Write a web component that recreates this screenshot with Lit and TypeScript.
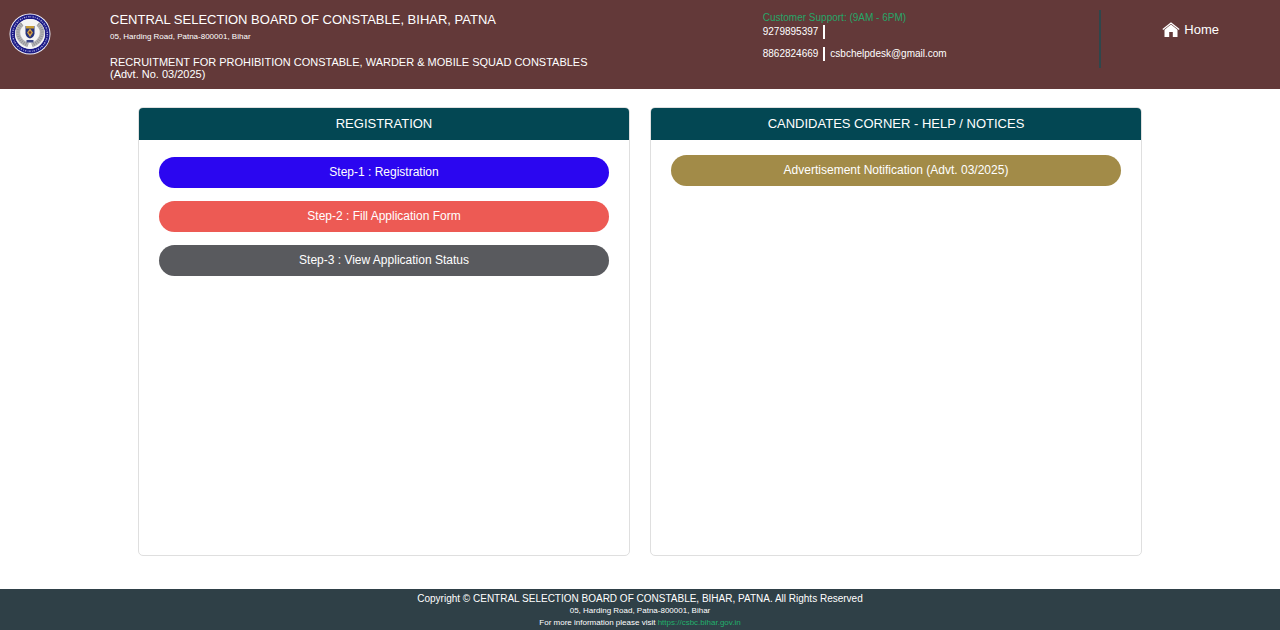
import { LitElement, html, css } from "lit";
import { customElement } from "lit/decorators.js";

@customElement("board-emblem")
class BoardEmblem extends LitElement {
  static styles = css`
    :host { display: block; }
    svg { display: block; width: 42px; height: 42px; }
  `;
  render() {
    return html`
      <svg viewBox="0 0 42 42" role="img" aria-label="Board emblem">
        <circle cx="21" cy="21" r="20.5" fill="#f1f1f8" />
        <circle cx="21" cy="21" r="17.3" fill="none" stroke="#1d1c86" stroke-width="4.6" />
        <circle cx="21" cy="21" r="17.3" fill="none" stroke="#a9a9dc" stroke-width="1.4" stroke-dasharray="1.3 1 .7 1.4" />
        <circle cx="21" cy="21" r="15" fill="#f4f4f4" />
        <path d="M13 11C6 17 8 28 19 32M29 11c7 6 5 17-6 21" fill="none" stroke="#b4b4b6" stroke-width="4.600" />
        <path d="M13 11C6 17 8 28 19 32M29 11c7 6 5 17-6 21" fill="none" stroke="#8f8f94" stroke-width="3" stroke-dasharray=".8 1.400" />
        <path d="M16.500 13h9v7.500q-.5 4-4.500 5-4-1-4.500-5z" fill="#25337c" />
        <path d="M17 13h8v2.500h-8z" fill="#c79c36" />
        <path d="M21 15.500l3 4-3 4.500-3-4.500z" fill="#d2a548" />
        <circle cx="21" cy="19.500" r="1.300" fill="#7b3430" />
        <path d="M17.500 27h7v2.500h-7z" fill="#3c4686" />
      </svg>
    `;
  }
}

@customElement("notice-panel")
class NoticePanel extends LitElement {
  static properties = { heading: {} };
  declare heading: string;
  static styles = css`
    :host {
      display: flex;
      flex-direction: column;
      border: 1px solid #dfdfdf;
      border-radius: 5px;
      background: #fff;
      overflow: hidden;
      box-sizing: border-box;
    }
    .heading {
      margin: 0;
      background: #034753;
      color: #fff;
      font-size: 13px;
      font-weight: 400;
      line-height: 32px;
      text-align: center;
    }
  `;
  render() {
    return html`<h2 class="heading">${this.heading}</h2><slot></slot>`;
  }
}

@customElement("app-root")
class AppRoot extends LitElement {
  static styles = css`
    :host {
      display: flex;
      flex-direction: column;
      min-height: 100vh;
      background: #fff;
      color: #fff;
      font-family: "Liberation Sans", Arial, sans-serif;
    }
    header {
      display: grid;
      grid-template-columns: 101px 106fr 55fr 29fr;
      background: #633939;
      padding: 10px 0 9px 9px;
    }
    h1, p { margin: 0; font-weight: 400; }
    .emblem { padding-top: 3px; }
    .title { font-size: 13px; line-height: 20px; }
    .address { font-size: 8px; line-height: 14px; }
    .post { font-size: 11px; line-height: 12px; margin-top: 12px; }
    .support { font-size: 10px; border-right: 2px solid #2f474c; height: 58px; box-sizing: border-box; padding-top: 1px; }
    .hours { color: #26a668; line-height: 14px; }
    .contact { display: flex; align-items: center; line-height: 14px; margin-bottom: 8px; }
    .contact a { color: #fff; text-decoration: none; }
    .phone { border-right: 2px solid #fff; padding-right: 5px; margin-right: 5px; }
    .home {
      display: flex;
      justify-self: center;
      align-self: start;
      align-items: center;
      gap: 4px;
      margin-top: 12px;
      color: #fff;
      font-size: 13px;
      line-height: 16px;
      text-decoration: none;
    }
    .home svg { width: 18px; height: 16px; }
    main {
      flex: 1;
      display: grid;
      grid-template-columns: 1fr 1fr;
      gap: 20px;
      width: 100%;
      max-width: 1004px;
      box-sizing: border-box;
      margin: 0 auto;
      padding: 18px 0 33px;
    }
    .steps { display: flex; flex-direction: column; gap: 13px; padding: 17px 20px; }
    .notices { padding-top: 15px; }
    button {
      border: 0;
      border-radius: 16px;
      padding: 0 12px 1px;
      color: #fff;
      font: 12px/30px "Liberation Sans", Arial, sans-serif;
      cursor: pointer;
    }
    .register { background: #2b06f0; }
    .fill { background: #ed5a54; }
    .status { background: #595a5e; }
    .advert { background: #a28b48; }
    footer {
      background: #2f4047;
      text-align: center;
      padding: 4px 0 1px;
      font-size: 8px;
      line-height: 12px;
    }
    .copyright { font-size: 10px; line-height: 12px; }
    footer a { color: #22b06c; text-decoration: none; }
  `;
  render() {
    return html`
      <header>
        <board-emblem class="emblem"></board-emblem>
        <div>
          <h1 class="title">CENTRAL SELECTION BOARD OF CONSTABLE, BIHAR, PATNA</h1>
          <p class="address">05, Harding Road, Patna-800001, Bihar</p>
          <p class="post">RECRUITMENT FOR PROHIBITION CONSTABLE, WARDER &amp; MOBILE SQUAD CONSTABLES<br />(Advt. No. 03/2025)</p>
        </div>
        <div class="support">
          <p class="hours">Customer Support: (9AM - 6PM)</p>
          <p class="contact"><a class="phone" href="tel:9279895397">9279895397</a></p>
          <p class="contact"><a class="phone" href="tel:8862824669">8862824669</a><a href="mailto:csbchelpdesk@gmail.com">csbchelpdesk@gmail.com</a></p>
        </div>
        <a class="home" href="#">
          <svg viewBox="0 0 18 16" aria-hidden="true">
            <path d="M.8 7.500L9 1.100l8.200 6.400" fill="none" stroke="#fff" stroke-width="1.300" />
            <path d="M9 2.600L2.500 7.800V15h4.700v-5h3.600v5h4.700V7.800z" fill="#fff" />
          </svg>
          Home
        </a>
      </header>
      <main>
        <notice-panel heading="REGISTRATION">
          <div class="steps">
            <button class="register">Step-1 : Registration</button>
            <button class="fill">Step-2 : Fill Application Form</button>
            <button class="status">Step-3 : View Application Status</button>
          </div>
        </notice-panel>
        <notice-panel heading="CANDIDATES CORNER - HELP / NOTICES">
          <div class="steps notices">
            <button class="advert">Advertisement Notification (Advt. 03/2025)</button>
          </div>
        </notice-panel>
      </main>
      <footer>
        <p class="copyright">Copyright © CENTRAL SELECTION BOARD OF CONSTABLE, BIHAR, PATNA. All Rights Reserved</p>
        <p>05, Harding Road, Patna-800001, Bihar</p>
        <p>For more information please visit <a href="https://csbc.bihar.gov.in">https://csbc.bihar.gov.in</a></p>
      </footer>
    `;
  }
}
